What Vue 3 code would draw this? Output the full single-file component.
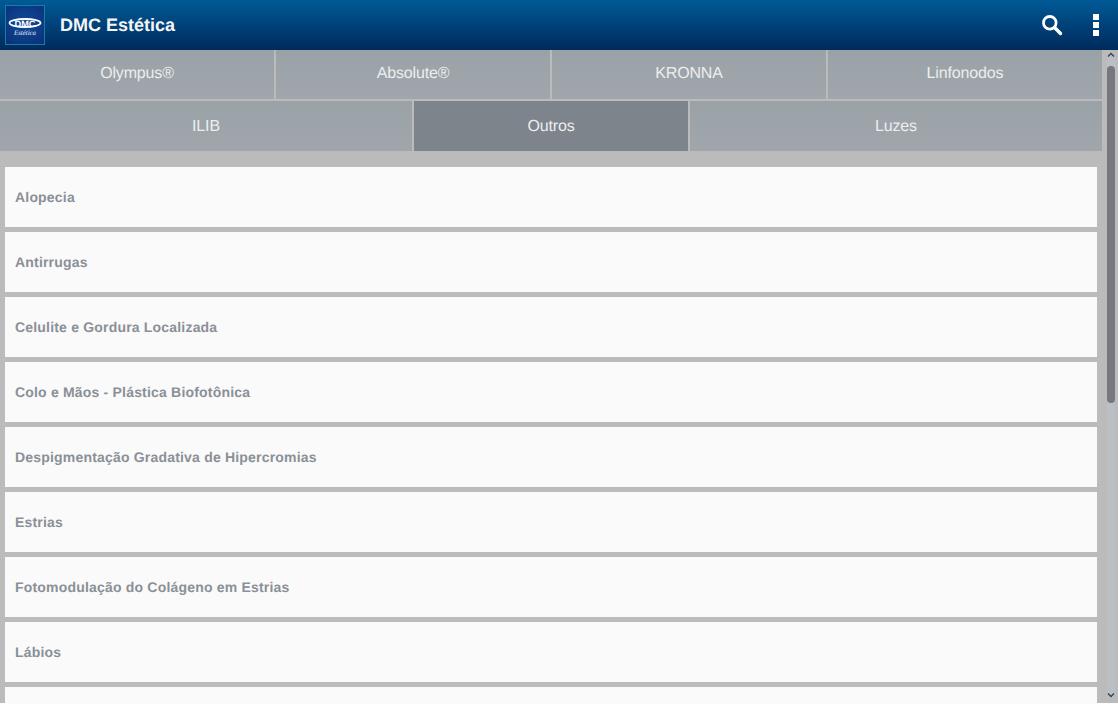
<script setup>
const row1 = ['Olympus®', 'Absolute®', 'KRONNA', 'Linfonodos']
const row2 = [
  { label: 'ILIB', span: 3 },
  { label: 'Outros', span: 2, active: true },
  { label: 'Luzes', span: 3 }
]
const items = [
  'Alopecia',
  'Antirrugas',
  'Celulite e Gordura Localizada',
  'Colo e Mãos - Plástica Biofotônica',
  'Despigmentação Gradativa de Hipercromias',
  'Estrias',
  'Fotomodulação do Colágeno em Estrias',
  'Lábios'
]
</script>

<template>
  <div class="app">
    <header class="header">
      <div class="logo">
        <svg width="38" height="38" viewBox="0 0 38 38">
          <ellipse cx="19" cy="17" rx="15.5" ry="4" fill="none" stroke="#fff" stroke-width="1.8" />
          <text x="19" y="20.5" text-anchor="middle" textLength="21" lengthAdjust="spacingAndGlyphs" class="logo-dmc">DMC</text>
          <text x="19" y="29" text-anchor="middle" textLength="22" lengthAdjust="spacingAndGlyphs" class="logo-sub">Estética</text>
        </svg>
      </div>
      <h1 class="title">DMC Estética</h1>
      <div class="actions">
        <svg class="search" width="22" height="22" viewBox="0 0 22 22">
          <circle cx="8.8" cy="8.8" r="6.3" fill="none" stroke="#fff" stroke-width="2.8" />
          <path d="M13.5 13.5 L19.5 19.5" stroke="#fff" stroke-width="3.4" stroke-linecap="round" />
        </svg>
        <div class="dots"><i></i><i></i><i></i></div>
      </div>
    </header>
    <div class="body">
      <main class="main">
        <nav class="tabs">
          <button v-for="t in row1" :key="t" class="tab span2 upper">{{ t }}</button>
          <button
            v-for="t in row2"
            :key="t.label"
            class="tab lower"
            :class="[t.span === 3 ? 'span3' : 'span2', { active: t.active }]"
          >{{ t.label }}</button>
        </nav>
        <div class="list">
          <div v-for="i in items" :key="i" class="item">{{ i }}</div>
          <div class="item"></div>
        </div>
      </main>
      <div class="scrollbar">
        <div class="track">
          <svg class="arrow up" width="8" height="6" viewBox="0 0 8 6">
            <path d="M1 4.5 L4 1.5 L7 4.5" fill="none" stroke="#3c4048" stroke-width="1.4" />
          </svg>
          <div class="thumb"></div>
          <svg class="arrow down" width="8" height="6" viewBox="0 0 8 6">
            <path d="M1 1.5 L4 4.5 L7 1.5" fill="none" stroke="#3c4048" stroke-width="1.4" />
          </svg>
        </div>
      </div>
    </div>
  </div>
</template>

<style>
html, body { margin: 0; overflow: hidden; background: #fcfcfc; }
</style>

<style scoped>
.app {
  width: 1118px;
  height: 703px;
  display: flex;
  flex-direction: column;
  overflow: hidden;
  font-family: "Liberation Sans", Arial, sans-serif;
  text-rendering: geometricPrecision;
  background: #bbbbbb;
}
.header {
  height: 50px;
  flex: none;
  display: flex;
  align-items: center;
  background: linear-gradient(to bottom, #005a96, #002a5c);
}
.logo {
  width: 38px;
  height: 38px;
  margin-left: 5px;
  border: 1px solid #1380ab;
  background: radial-gradient(circle at 50% 45%, #114a9a, #0a3076);
  flex: none;
}
.logo svg { display: block; }
.logo-dmc {
  font: bold 9px "Liberation Sans", sans-serif;
  fill: #fff;
}
.logo-sub {
  font: italic 7px "Liberation Serif", serif;
  fill: #e8eef6;
}
.title {
  margin: 0 0 0 15px;
  font-size: 18px;
  font-weight: bold;
  color: #f5f5f5;
}
.actions {
  margin-left: auto;
  display: flex;
  align-items: center;
}
.search { margin-right: 30px; }
.dots {
  display: flex;
  flex-direction: column;
  gap: 2px;
  margin-right: 19px;
}
.dots i {
  display: block;
  width: 6px;
  height: 6px;
  background: #fff;
}
.body {
  flex: 1;
  min-height: 0;
  display: flex;
}
.main {
  flex: 1;
  min-width: 0;
  overflow: hidden;
}
.tabs {
  display: grid;
  grid-template-columns: repeat(8, 136px);
  column-gap: 2px;
  row-gap: 2px;
}
.tab {
  height: 49px;
  border: 0;
  padding: 0;
  background: linear-gradient(to bottom, #9aa2a8, #a0a6ab);
  color: #eceeef;
  font: 16px "Liberation Sans", Arial, sans-serif;
  letter-spacing: -0.15px;
  text-rendering: geometricPrecision;
}
.tab.upper { padding-bottom: 2px; }
.tab.lower { height: 50px; padding-top: 2px; }
.tab.span2 { grid-column: span 2; }
.tab.span3 { grid-column: span 3; }
.tab.active { background: #7d848b; }
.list {
  margin-top: 16px;
  padding: 0 5px;
  display: flex;
  flex-direction: column;
  gap: 5px;
}
.item {
  height: 60px;
  flex: none;
  padding-left: 10px;
  display: flex;
  align-items: center;
  background: #fafafa;
  color: #8a9097;
  font-size: 14px;
  font-weight: bold;
  letter-spacing: 0.19px;
}
.scrollbar {
  width: 16px;
  flex: none;
  padding: 5px 3px 5px 5px;
  box-sizing: border-box;
  display: flex;
  background: #bbbbbb;
}
.track {
  position: relative;
  flex: 1;
  background: #b9bfc3;
}
.arrow { position: absolute; left: 0; }
.arrow.up { top: -3px; }
.arrow.down { bottom: 0; }
.thumb {
  margin-top: 11px;
  height: 337px;
  background: #77787f;
  border-radius: 4px;
}
</style>
